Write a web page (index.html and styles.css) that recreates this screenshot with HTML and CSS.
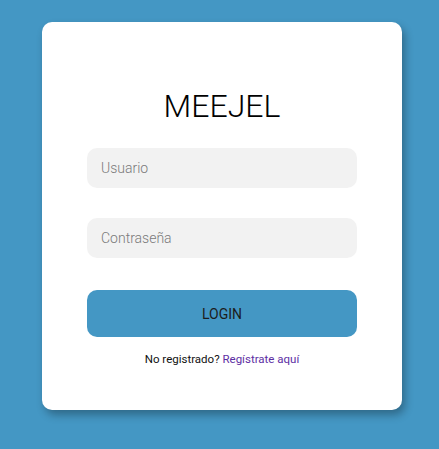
FILE: index.html
```html
<!DOCTYPE html>
<html lang="es">
<head>
<meta charset="utf-8">
<title>MEEJEL</title>
<link rel="stylesheet" href="styles.css">
</head>
<body>
<div class="page">
  <form class="card">
    <h1 class="title">MEEJEL</h1>
    <input class="field" type="text" placeholder="Usuario">
    <input class="field field-pass" type="password" placeholder="Contraseña">
    <button class="btn" type="button">LOGIN</button>
    <p class="note">No registrado? <a class="link" href="#">Regístrate aquí</a></p>
  </form>
</div>
</body>
</html>
```
FILE: styles.css
```css
* { box-sizing: border-box; }
html, body {
  margin: 0;
  padding: 0;
  height: 100%;
}
body {
  background: #4497c4;
  font-family: Roboto, "Liberation Sans", sans-serif;
}
.page {
  display: flex;
  padding: 22px 0 0 42px;
}
.card {
  width: 360px;
  height: 388px;
  background: #fff;
  border-radius: 10px;
  box-shadow: 3px 5px 8px rgba(0, 0, 0, 0.3);
  padding: 66px 45px 0;
  display: flex;
  flex-direction: column;
}
.title {
  margin: 0 0 23px;
  font-size: 32px;
  font-weight: 300;
  line-height: 37px;
  text-align: center;
  color: #000;
}
.field {
  display: block;
  width: 270px;
  height: 40px;
  border: 0;
  border-radius: 10px;
  background: #f2f2f2;
  padding: 0 14px;
  font-family: Roboto, "Liberation Sans", sans-serif;
  font-size: 14px;
  font-weight: 300;
  color: #333;
  outline: none;
}
.field::placeholder { color: #7a7a7a; }
.field-pass { margin-top: 30px; }
.btn {
  margin-top: 32px;
  width: 270px;
  height: 47px;
  border: 0;
  border-radius: 10px;
  background: #4497c4;
  font-family: Roboto, "Liberation Sans", sans-serif;
  font-size: 14px;
  color: #1c1c1c;
}
.note {
  margin: 15px 0 0;
  text-align: center;
  font-size: 11.5px;
  line-height: 14px;
  color: #111;
}
.link {
  color: #5d2ea3;
  text-decoration: none;
}
```
